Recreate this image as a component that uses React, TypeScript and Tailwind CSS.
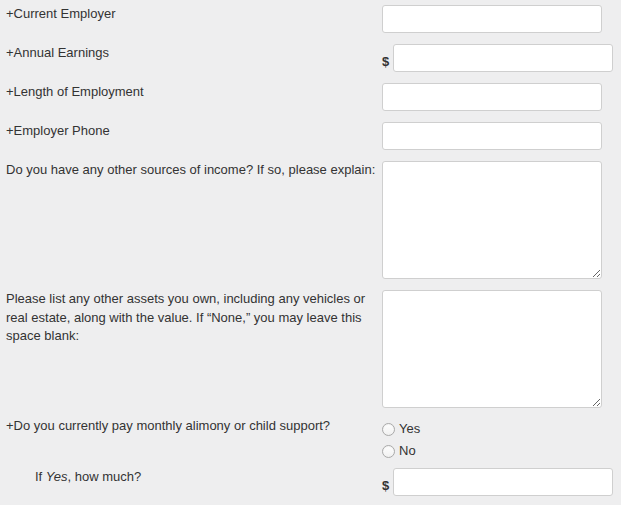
const font = { fontFamily: '"Liberation Sans", Arial, sans-serif' }

function Label({ children, indent = false, nowrap = false }: { children: React.ReactNode; indent?: boolean; nowrap?: boolean }) {
  return (
    <div className={`-mt-[1px] w-[376px] shrink-0 text-[13px] leading-[18.5px] text-[#333] ${indent ? 'pl-[35px]' : 'pl-[6px]'}`}>
      <div className={nowrap ? 'whitespace-nowrap' : 'w-[364px]'}>{children}</div>
    </div>
  )
}

function TextInput({ money = false }: { money?: boolean }) {
  return (
    <div className="ml-[6px] flex items-center">
      {money && <span className="mr-[3px] mt-[8px] w-[8px] text-[13px] font-bold text-[#333]">$</span>}
      <input
        type="text"
        className="h-[28px] w-[220px] rounded-[3px] border border-[#cfcfcf] bg-white outline-none"
      />
    </div>
  )
}

function Row({
  label,
  children,
  indent,
  nowrap,
  className = '',
}: {
  label: React.ReactNode
  children: React.ReactNode
  indent?: boolean
  nowrap?: boolean
  className?: string
}) {
  return (
    <div className={`flex ${className}`}>
      <Label indent={indent} nowrap={nowrap}>{label}</Label>
      <div className="-mt-[1px]">{children}</div>
    </div>
  )
}

function Radio({ label }: { label: string }) {
  return (
    <label className="flex h-[22px] items-center text-[13px] text-[#333]">
      <span className="mr-[4px] h-[13px] w-[13px] rounded-full border border-[#a9a9a9] bg-gradient-to-b from-white to-[#f0f0f0] shadow-[inset_0_1px_1px_rgba(0,0,0,0.05)]" />
      {label}
    </label>
  )
}

export default function App() {
  return (
    <div className="min-h-[505px] w-[621px] bg-[#eeeeef] pt-[6px]" style={font}>
      <Row label="+Current Employer" className="mb-[12px]">
        <TextInput />
      </Row>
      <Row label="+Annual Earnings" className="mb-[12px]">
        <TextInput money />
      </Row>
      <Row label="+Length of Employment" className="mb-[12px]">
        <TextInput />
      </Row>
      <Row label="+Employer Phone" className="mb-[12px]">
        <TextInput />
      </Row>
      <Row label="Do you have any other sources of income? If so, please explain:" nowrap className="mb-[12px]">
        <textarea className="ml-[6px] block h-[118px] w-[220px] rounded-[3px] border border-[#cfcfcf] bg-white outline-none" />
      </Row>
      <Row label={<>Please list any other assets you own, including any vehicles or real estate, along with the value. If “None,” you may leave this space blank:</>} className="mb-[10px]">
        <textarea className="ml-[6px] block h-[118px] w-[220px] rounded-[3px] border border-[#cfcfcf] bg-white outline-none" />
      </Row>
      <Row label="+Do you currently pay monthly alimony or child support?" className="mb-[7px]">
        <div className="ml-[6px] mt-[1px]">
          <Radio label="Yes" />
          <Radio label="No" />
        </div>
      </Row>
      <Row label={<>If <i>Yes</i>, how much?</>} indent>
        <TextInput money />
      </Row>
    </div>
  )
}
